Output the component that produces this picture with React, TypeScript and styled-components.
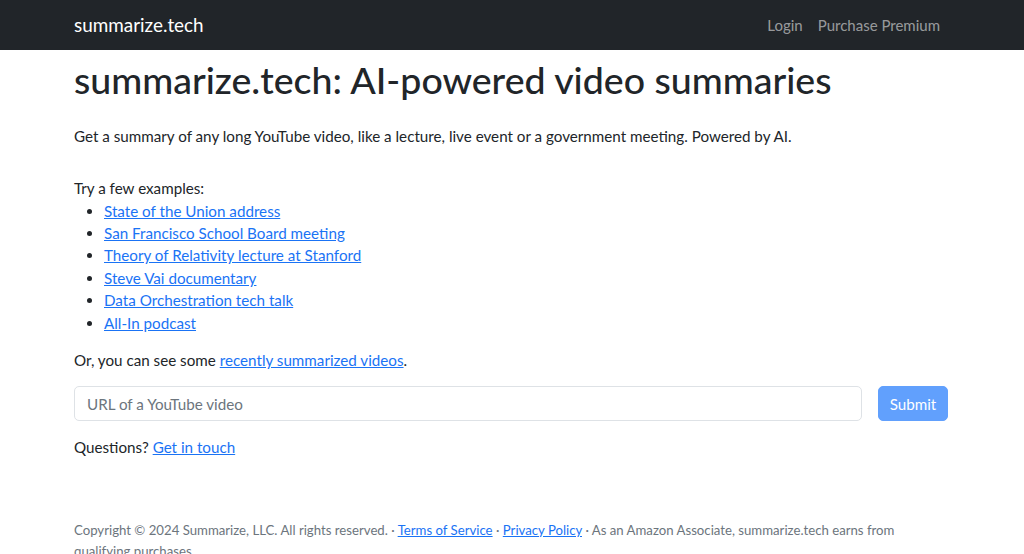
import React from "react"
import styled, { createGlobalStyle } from "styled-components"

const GlobalStyle = createGlobalStyle`
  html, body {
    margin: 0;
    padding: 0;
    background: #fff;
  }
  body {
    font-family: Lato, "Open Sans", sans-serif;
    font-size: 15.2px;
    line-height: 22.4px;
    color: #212529;
  }
  * {
    box-sizing: border-box;
  }
`

const examples = [
  "State of the Union address",
  "San Francisco School Board meeting",
  "Theory of Relativity lecture at Stanford",
  "Steve Vai documentary",
  "Data Orchestration tech talk",
  "All-In podcast",
]

const App: React.FC = () => (
  <>
    <GlobalStyle />
    <Navbar>
      <NavInner>
        <Brand href="#">summarize.tech</Brand>
        <NavLinks>
          <NavLink href="#">Login</NavLink>
          <NavLink href="#">Purchase Premium</NavLink>
        </NavLinks>
      </NavInner>
    </Navbar>
    <Main>
      <Title>summarize.tech: AI-powered video summaries</Title>
      <Lead>
        Get a summary of any long YouTube video, like a lecture, live event or a
        government meeting. Powered by AI.
      </Lead>
      <Text>Try a few examples:</Text>
      <ExampleList>
        {examples.map((e) => (
          <li key={e}>
            <Link href="#">{e}</Link>
          </li>
        ))}
      </ExampleList>
      <Text>
        Or, you can see some <Link href="#">recently summarized videos</Link>.
      </Text>
      <UrlForm onSubmit={(ev) => ev.preventDefault()}>
        <UrlInput type="text" placeholder="URL of a YouTube video" />
        <SubmitButton type="submit" disabled>
          Submit
        </SubmitButton>
      </UrlForm>
      <Text>
        Questions? <Link href="#">Get in touch</Link>
      </Text>
    </Main>
    <Footer>
      Copyright © 2024 Summarize, LLC. All rights reserved. ·{" "}
      <Link href="#">Terms of Service</Link> · <Link href="#">Privacy Policy</Link>{" "}
      · As an Amazon Associate, summarize.tech earns from qualifying purchases.
    </Footer>
  </>
)
export default App

const Navbar = styled.nav`
  background-color: #212529;
  height: 50px;
`

const NavInner = styled.div`
  max-width: 900px;
  margin: 0 auto;
  padding: 0 12px;
  height: 100%;
  display: flex;
  align-items: center;
  justify-content: space-between;
`

const Brand = styled.a`
  color: #fff;
  font-size: 18.9px;
  text-decoration: none;
`

const NavLinks = styled.div`
  display: flex;
  gap: 15px;
  padding-right: 10px;
`

const NavLink = styled.a`
  color: rgba(255, 255, 255, 0.55);
  font-size: 15px;
  text-decoration: none;
`

const Main = styled.main`
  max-width: 900px;
  margin: 0 auto;
  padding: 8px 12px 0;
`

const Title = styled.h1`
  font-size: 37.5px;
  font-weight: 500;
  line-height: 44.8px;
  margin: 0 0 22px;
`

const Lead = styled.p`
  margin: 0 0 30px;
`

const Text = styled.p`
  margin: 0 0 15px;
`

const ExampleList = styled.ul`
  margin: -15px 0 15px;
  padding-left: 30px;
`

const Link = styled.a`
  color: #1a73f5;
  text-decoration: underline;
`

const UrlForm = styled.form`
  display: flex;
  gap: 16px;
  margin: 0 2px 15px 0;
`

const UrlInput = styled.input`
  flex: 1;
  height: 35px;
  padding: 5px 12px;
  font: inherit;
  color: #212529;
  border: 1px solid #dee2e6;
  border-radius: 5px;
  &::placeholder {
    color: #6c757d;
  }
`

const SubmitButton = styled.button`
  width: 70px;
  height: 35px;
  padding: 0;
  font: inherit;
  color: #fff;
  background-color: #0d6efd;
  opacity: 0.65;
  border: 1px solid #0d6efd;
  border-radius: 5px;
`

const Footer = styled.footer`
  max-width: 900px;
  margin: 61px auto 0;
  padding: 0 20px 0 12px;
  font-size: 13.2px;
  line-height: 21px;
  color: #6c757d;
`
